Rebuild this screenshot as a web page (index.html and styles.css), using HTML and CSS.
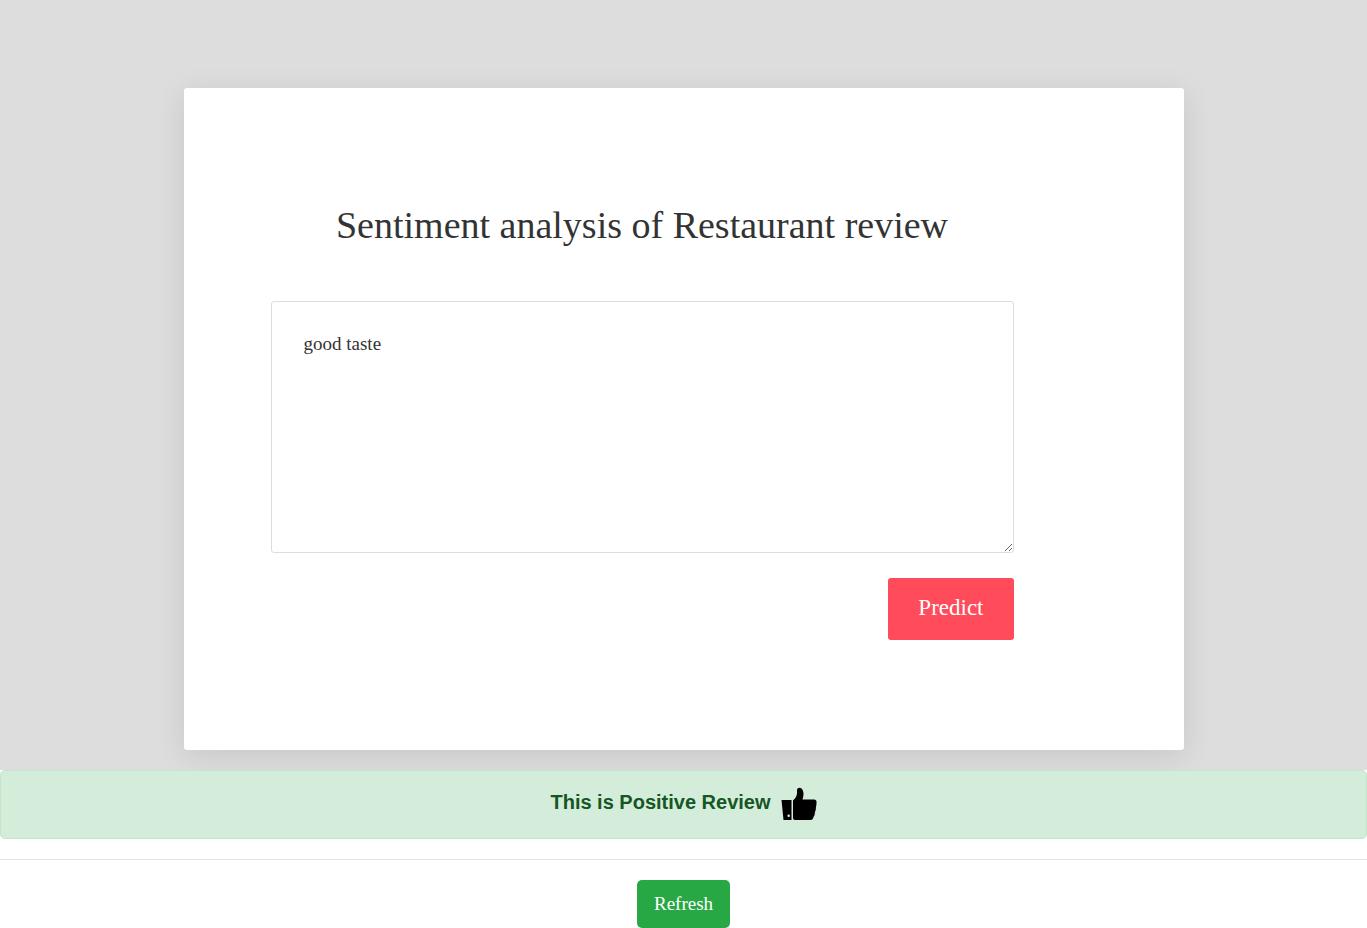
FILE: index.html
```html
<!DOCTYPE html>
<html lang="en">
<head>
<meta charset="utf-8">
<title>Sentiment analysis</title>
<link rel="stylesheet" href="styles.css">
</head>
<body>
<main class="main">
  <section class="card">
    <form class="review-form">
      <h1 class="title">Sentiment analysis of Restaurant review</h1>
      <textarea class="review" aria-label="Review">good taste</textarea>
      <button class="predict" type="button">Predict</button>
    </form>
  </section>
</main>
<div class="alert" role="alert">
  <strong>This is Positive Review</strong>
  <svg class="thumb" viewBox="0 0 36 34" aria-hidden="true">
    <path d="M0.5 13 H10.5 V33 H2.5 Z"/>
    <path d="M12 13.500 C15 11 16.500 8 16 4 C15.700 1 18.500 0 20.500 1.500 C23 4 23 8 21.500 12.500 H33.500 Q36 13 35.500 16 Q35.500 18 35 20 Q35 23 34 25 Q34 28 32.500 30 Q32 33 29.500 33 H14 Q12 33 12 31 Z"/>
    <circle class="cuff" cx="7.700" cy="28.700" r="1.300"/>
  </svg>
</div>
<hr class="rule">
<div class="actions"><button class="refresh" type="button">Refresh</button></div>
</body>
</html>
```
FILE: styles.css
```css
* {
  box-sizing: border-box;
}

body {
  margin: 0;
  background: #fff;
  color: #333;
  font-family: "Liberation Serif", "Times New Roman", serif;
}

.main {
  padding: 88px 16px 20px;
  background: #ddd;
}

.card {
  max-width: 1000px;
  margin: 0 auto;
  padding: 112px 170px 110px 87px;
  border-radius: 3px;
  background: #fff;
  box-shadow: 0 6px 30px rgba(0, 0, 0, 0.1);
}

.review-form {
  display: flex;
  flex-direction: column;
}

.title {
  margin: 0 0 50px;
  font-size: 38px;
  font-weight: 400;
  line-height: 51px;
  text-align: center;
}

.review {
  display: block;
  width: 100%;
  height: 252px;
  padding: 31px 32px;
  border: 1px solid #ddd;
  border-radius: 3px;
  color: #333;
  background: #fff;
  font: 19px/22px "Liberation Serif", "Times New Roman", serif;
  resize: vertical;
}

.predict {
  align-self: flex-end;
  margin-top: 25px;
  padding: 15px 30px 17px;
  border: 0;
  border-radius: 3px;
  color: #fff;
  background: #ff4b5a;
  font: 23px/30px "Liberation Serif", "Times New Roman", serif;
}

.alert {
  display: flex;
  justify-content: center;
  gap: 10px;
  padding: 16px 20px 17px;
  border: 1px solid #c3e6cb;
  border-radius: 5px;
  color: #155724;
  background: #d4edda;
  font: 20px/30px "Liberation Sans", Arial, sans-serif;
}

.thumb {
  width: 36px;
  height: 34px;
  fill: #000;
}

.cuff {
  fill: #d4edda;
}

.rule {
  margin: 20px 0;
  border: 0;
  border-top: 1px solid #e5e5e5;
}

.actions {
  text-align: center;
}

.refresh {
  display: inline-block;
  padding: 9px 17px;
  vertical-align: top;
  border: 0;
  border-radius: 5px;
  color: #fff;
  background: #28a745;
  font: 19px/30px "Liberation Serif", "Times New Roman", serif;
}
```
